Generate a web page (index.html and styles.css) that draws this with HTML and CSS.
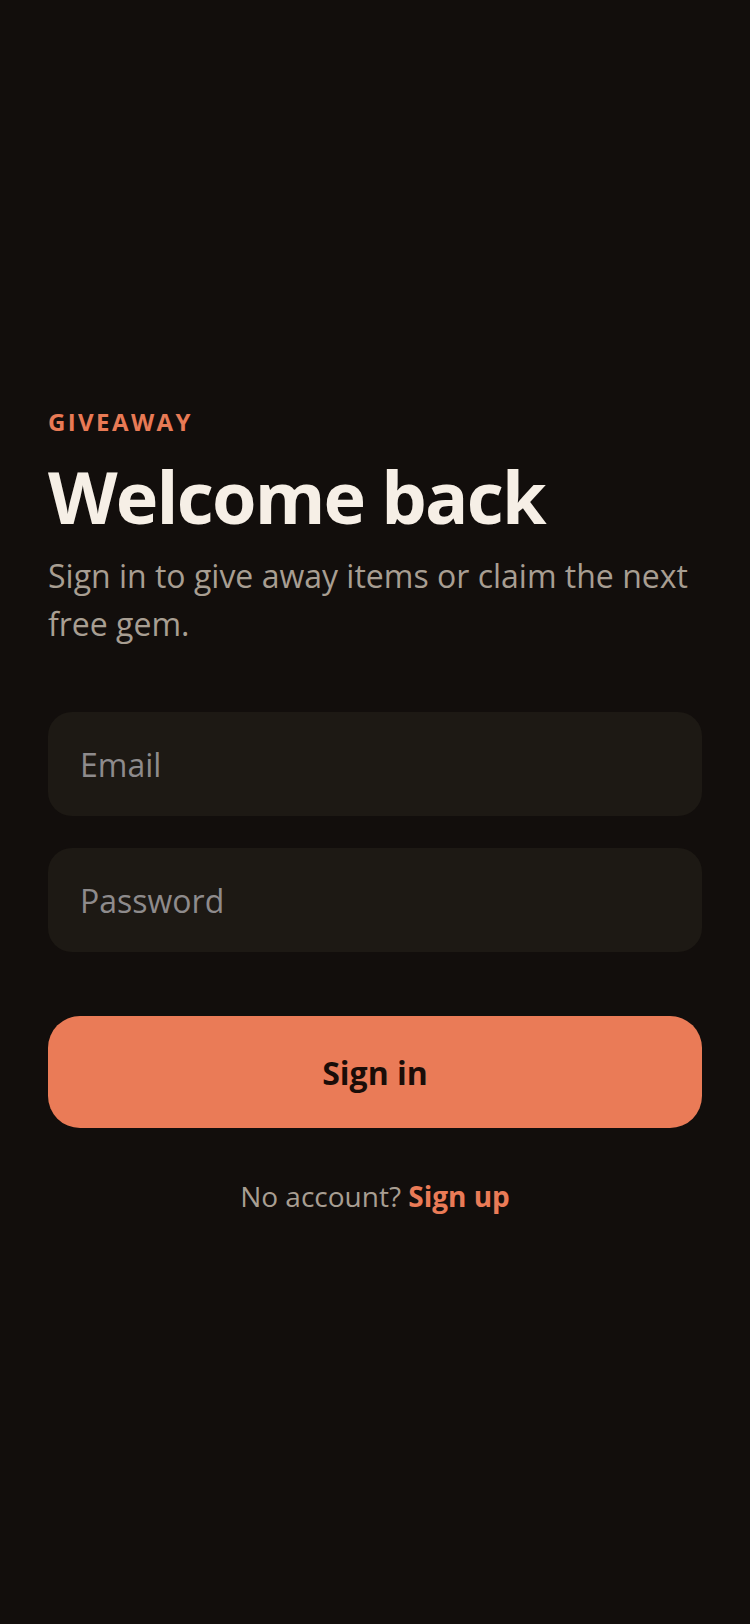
FILE: index.html
```html
<!DOCTYPE html>
<html lang="en">
<head>
<meta charset="utf-8">
<title>Welcome back</title>
<link rel="stylesheet" href="styles.css">
</head>
<body>
<main class="screen">
  <section class="auth">
    <div class="eyebrow">GIVEAWAY</div>
    <h1 class="title">Welcome back</h1>
    <p class="subtitle">Sign in to give away items or claim the next free gem.</p>
    <form class="form">
      <input class="field" type="email" placeholder="Email">
      <input class="field" type="password" placeholder="Password">
      <button class="primary" type="button">Sign in</button>
    </form>
    <p class="footer">No account? <a class="link" href="#">Sign up</a></p>
  </section>
</main>
</body>
</html>
```

FILE: styles.css
```css
* { box-sizing: border-box; }
html, body {
  margin: 0;
  padding: 0;
  background: #120e0c;
}
body {
  font-family: "Open Sans", "Noto Sans", sans-serif;
  color: #f6efe6;
}
.screen {
  min-height: 1624px;
  display: flex;
  flex-direction: column;
  justify-content: center;
  padding: 0 48px;
}
.auth {
  display: flex;
  flex-direction: column;
}
.eyebrow {
  font-size: 24px;
  font-weight: 700;
  letter-spacing: 0.1em;
  color: #e87a55;
  line-height: 32px;
}
.title {
  margin: 14px 0 0;
  font-size: 72px;
  font-weight: 700;
  letter-spacing: -0.025em;
  line-height: 88px;
  color: #f6efe6;
}
.subtitle {
  margin: 12px 0 0;
  font-size: 32px;
  line-height: 48px;
  color: #a89e92;
}
.form {
  margin-top: 64px;
  display: flex;
  flex-direction: column;
  gap: 32px;
}
.field {
  height: 104px;
  border: none;
  border-radius: 24px;
  background: #1d1914;
  padding: 0 32px;
  font-family: inherit;
  font-size: 32px;
  color: #f6efe6;
  outline: none;
}
.field::placeholder {
  color: #8e8b8c;
}
.primary {
  margin-top: 32px;
  height: 112px;
  border: none;
  border-radius: 32px;
  background: #ea7b57;
  color: #1a0d08;
  font-family: inherit;
  font-size: 32px;
  font-weight: 700;
}
.footer {
  margin: 46px 0 0;
  text-align: center;
  font-size: 28px;
  line-height: 44px;
  color: #a89e92;
}
.link {
  color: #ea7b57;
  font-weight: 700;
  text-decoration: none;
}
```
